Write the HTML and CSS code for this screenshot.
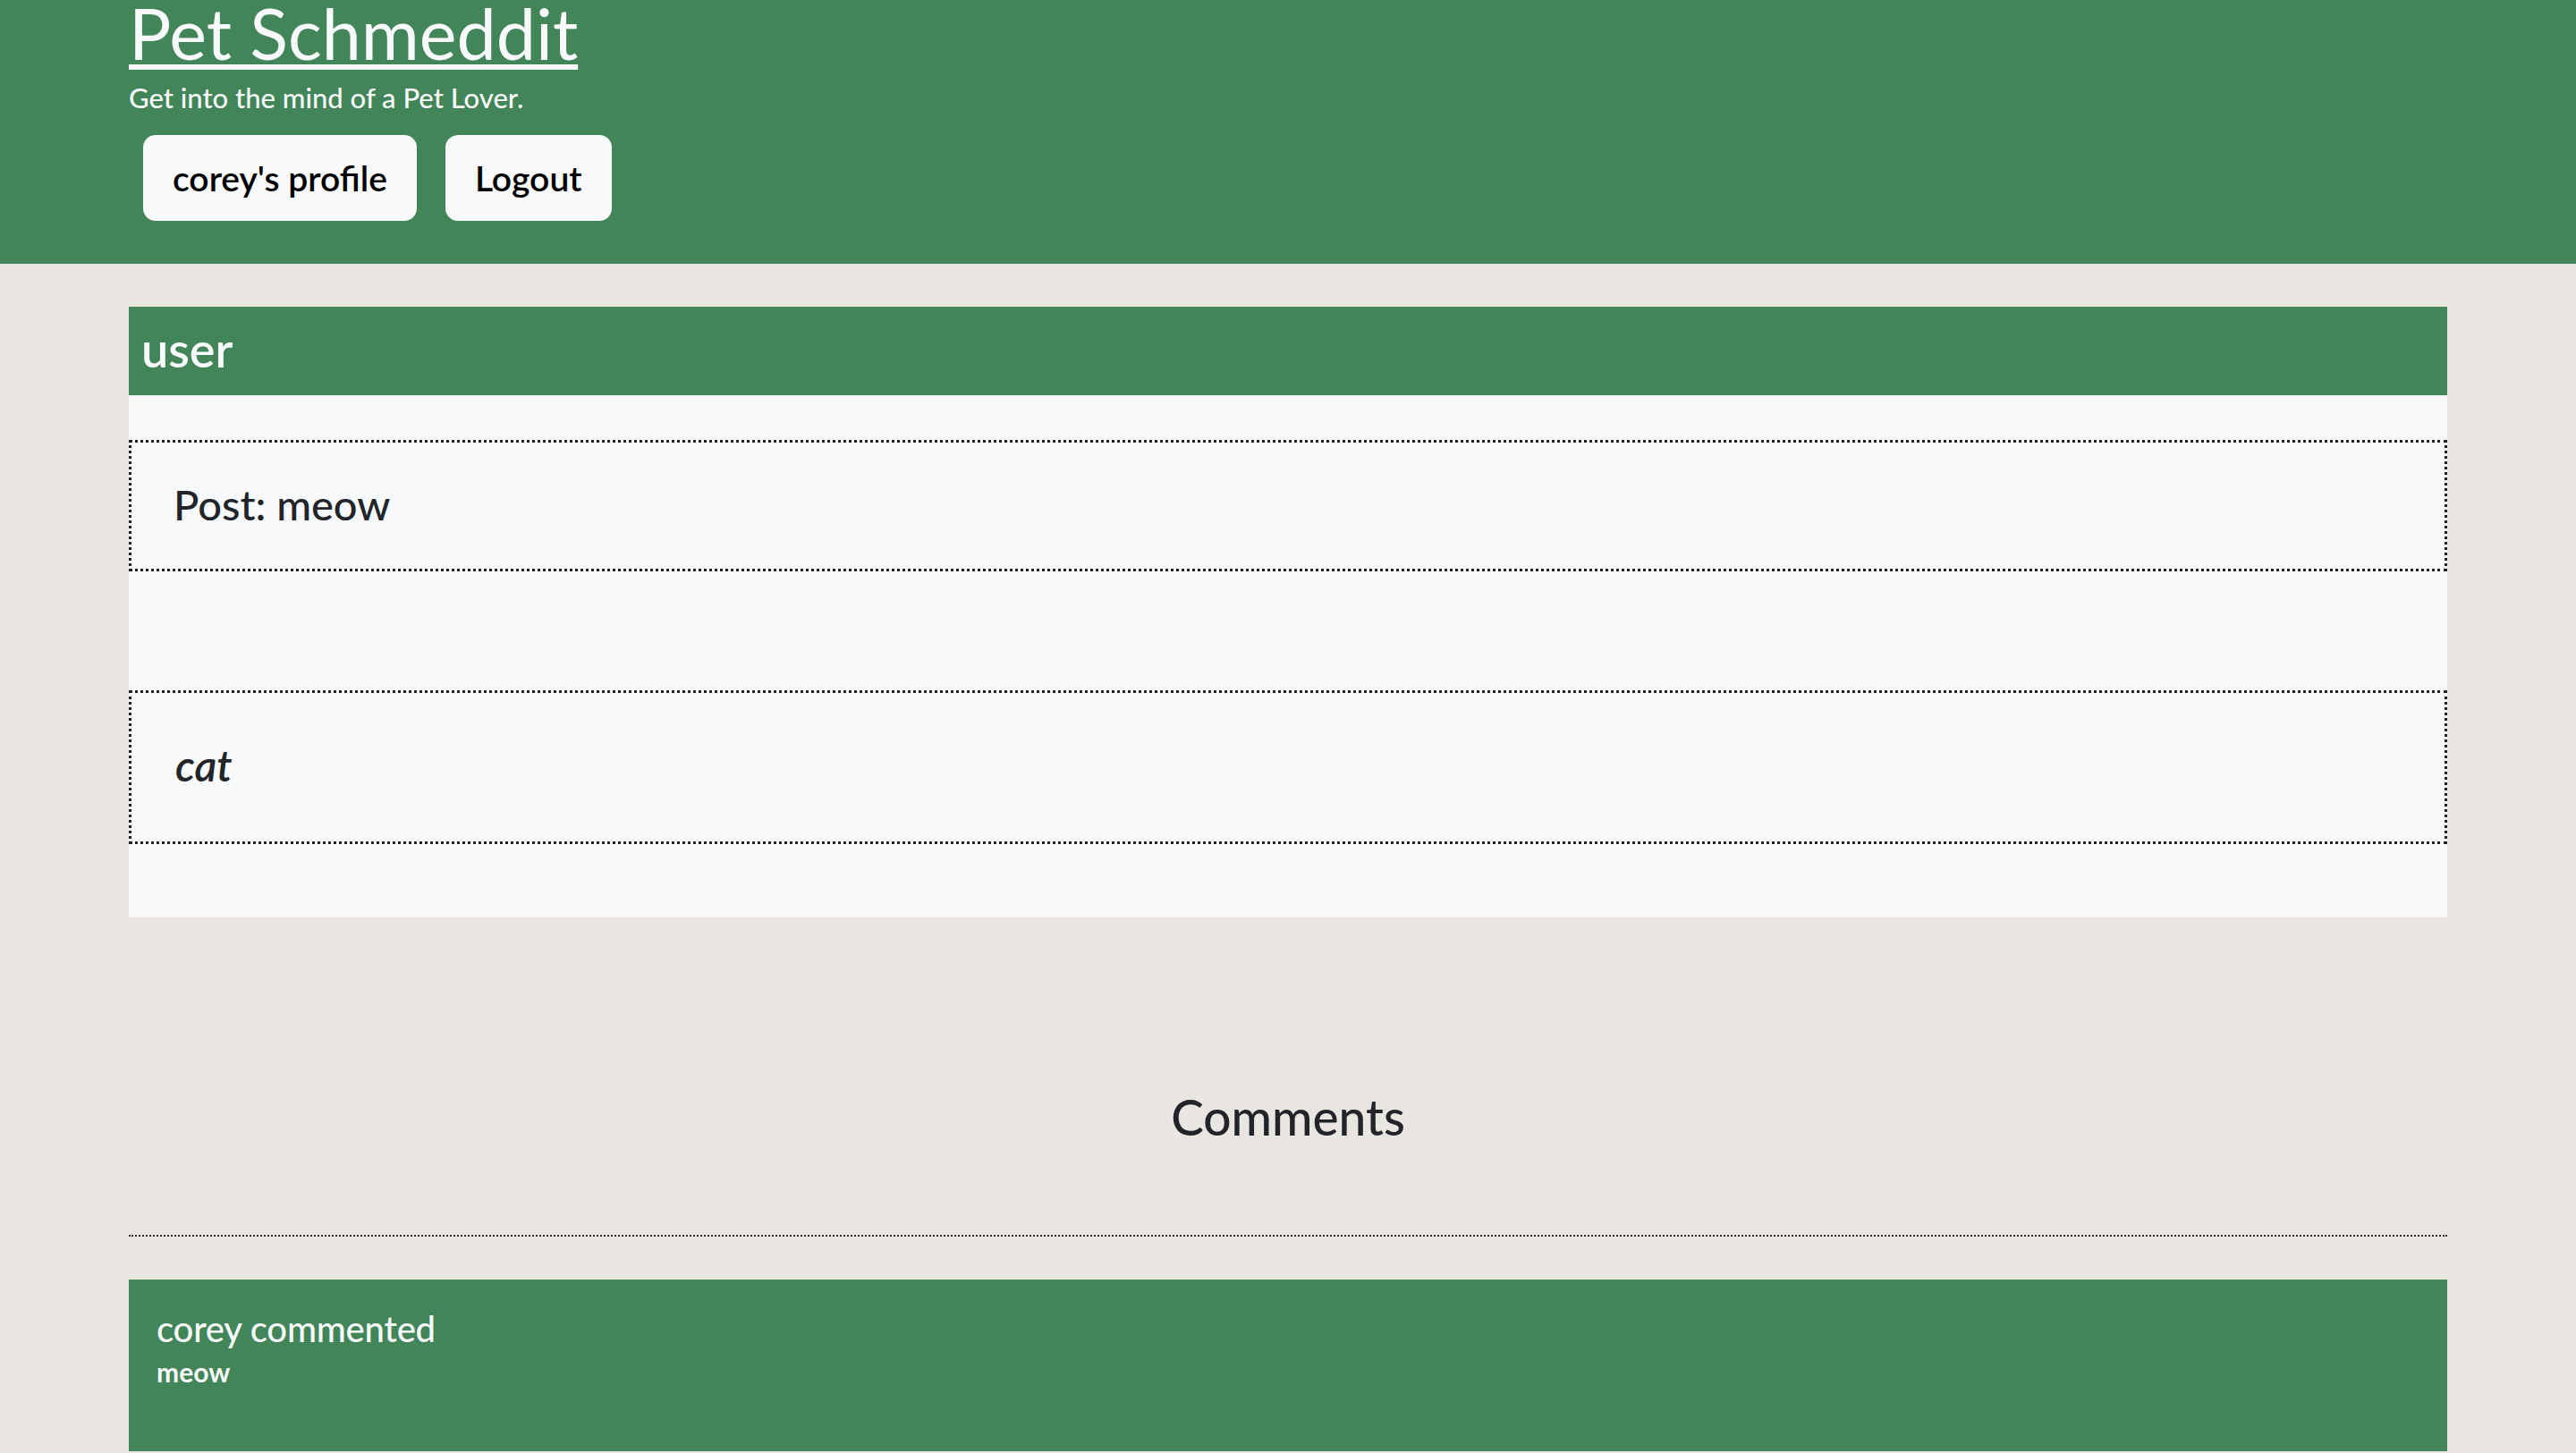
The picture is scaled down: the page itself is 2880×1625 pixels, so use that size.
FILE: index.html
```html
<!DOCTYPE html>
<html lang="en">
<head>
<meta charset="utf-8">
<title>Pet Schmeddit</title>
<link rel="stylesheet" href="styles.css">
</head>
<body>
<header class="site-header">
  <h1 class="site-title"><a href="#">Pet Schmeddit</a></h1>
  <p class="tagline">Get into the mind of a Pet Lover.</p>
  <nav class="nav-buttons">
    <a class="btn" href="#">corey's profile</a>
    <a class="btn" href="#">Logout</a>
  </nav>
</header>

<main class="container">
  <section class="post-card">
    <div class="post-author">user</div>
    <div class="post-body">
      <div class="dotted-box post-title-box">
        <h2 class="post-title">Post: meow</h2>
      </div>
      <div class="dotted-box post-content-box">
        <p class="post-content">cat</p>
      </div>
    </div>
  </section>

  <h2 class="comments-heading">Comments</h2>
  <hr class="divider">

  <article class="comment">
    <div class="comment-author">corey commented</div>
    <div class="comment-text">meow</div>
  </article>
</main>
</body>
</html>
```
FILE: styles.css
```css
html, body {
  margin: 0;
  padding: 0;
}

body {
  background: #e9e6e1;
  color: #212529;
  font-family: Lato, "Open Sans", sans-serif;
  overflow: hidden;
}

/* ---------- header ---------- */
.site-header {
  background: #418559;
  padding: 0 0 48px 144px;
}

.site-title {
  margin: 0;
  font-size: 79px;
  line-height: 0.94;
  font-weight: 400;
}

.site-title a {
  color: #f8f9fa;
  text-decoration: underline;
  text-decoration-thickness: 6px;
  text-underline-offset: 5px;
}

.tagline {
  margin: 20px 0 0;
  font-size: 31px;
  line-height: 1;
  font-weight: 500;
  color: #f8f9fa;
}

.nav-buttons {
  display: flex;
  gap: 32px;
  margin: 26px 0 0 16px;
}

.btn {
  display: flex;
  align-items: center;
  height: 96px;
  padding: 0 33px;
  box-sizing: border-box;
  background: #f8f9fa;
  color: #000;
  border-radius: 14px;
  font-size: 39px;
  font-weight: 600;
  text-decoration: none;
}

/* ---------- main ---------- */
.container {
  width: 90%;
  margin: 48px auto 0;
}

.post-card {
  background: #f8f9fa;
}

.post-author {
  background: #418559;
  color: #f8f9fa;
  font-size: 54px;
  line-height: 1;
  font-weight: 600;
  padding: 21px 14px 24px;
}

.post-body {
  padding: 50px 0 82px;
  display: flex;
  flex-direction: column;
  gap: 133px;
}

.dotted-box {
  border: 3px dotted #1f2326;
}

.post-title-box {
  padding: 46px 30px 48px 47px;
}

.post-title {
  margin: 0;
  font-size: 47px;
  line-height: 1;
  font-weight: 500;
}

.post-content-box {
  padding: 57px 30px 61px 49px;
}

.post-content {
  margin: 0;
  font-size: 48px;
  line-height: 1;
  font-style: italic;
  font-weight: 600;
}

.comments-heading {
  margin: 196px 0 0;
  text-align: center;
  font-size: 55px;
  line-height: 1;
  font-weight: 500;
}

.divider {
  margin: 104px 0 0;
  border: 0;
  border-top: 2px dotted #2a2d30;
  height: 0;
}

.comment {
  margin-top: 48px;
  background: #418559;
  color: #f8f9fa;
  padding: 35px 31px 74px;
}

.comment-author {
  font-size: 40px;
  line-height: 1;
  font-weight: 500;
  letter-spacing: -0.2px;
}

.comment-text {
  margin-top: 13px;
  font-size: 30px;
  line-height: 1;
  font-weight: 700;
}
```
